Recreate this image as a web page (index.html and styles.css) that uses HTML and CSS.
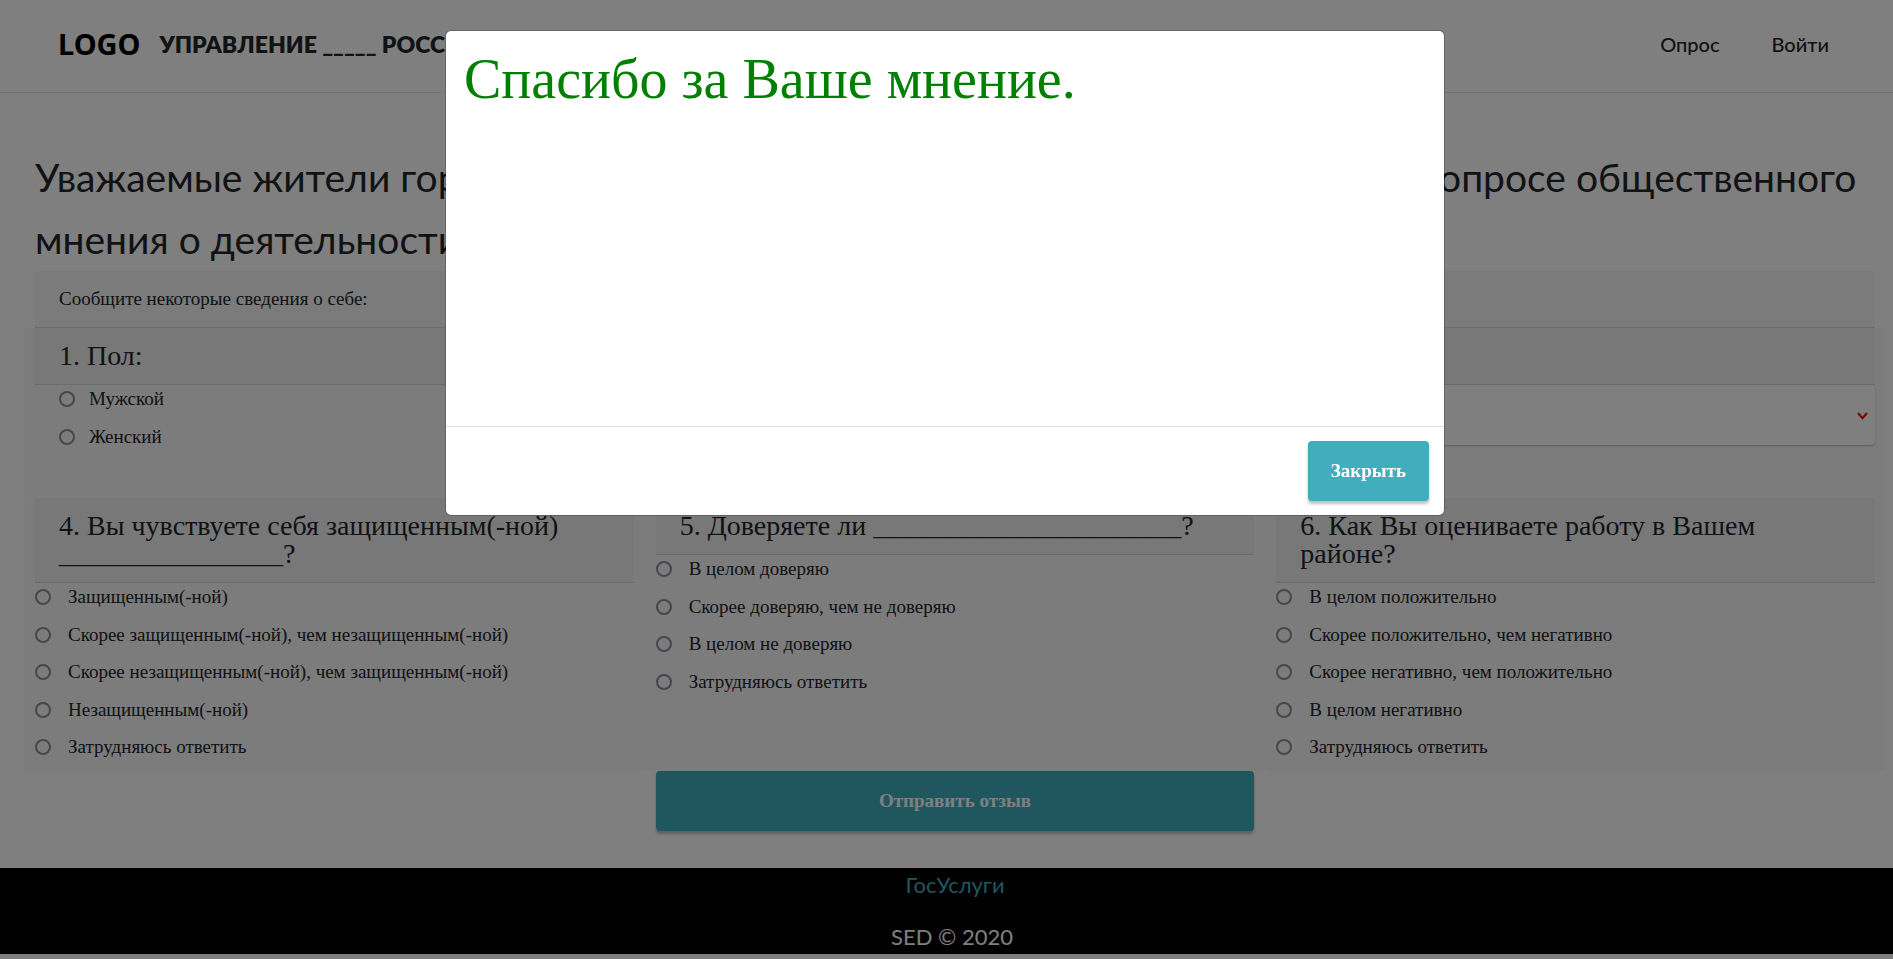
FILE: index.html
```html
<!DOCTYPE html>
<html lang="ru">
<head>
<meta charset="utf-8">
<meta name="viewport" content="width=device-width, initial-scale=1">
<title>Опрос</title>
<link rel="stylesheet" href="styles.css">
</head>
<body>
<header class="navbar">
  <a class="logo" href="#">LOGO</a>
  <span class="org">УПРАВЛЕНИЕ _____ РОССИИ</span>
  <nav class="menu">
    <a href="#">Опрос</a>
    <a href="#">Войти</a>
  </nav>
</header>

<main class="page">
  <h1 class="title">Уважаемые жители города ______! Просим Вас принять участие в анонимном опросе общественного мнения о деятельности управления</h1>
  <form class="survey">
    <p class="card-header intro">Сообщите некоторые сведения о себе:</p>
    <div class="row">
      <fieldset class="card about">
        <legend class="card-header question">1. Пол:</legend>
        <div class="options inset">
          <label class="option"><input type="radio" name="sex">Мужской</label>
          <label class="option"><input type="radio" name="sex">Женский</label>
        </div>
      </fieldset>
      <div class="card about">
        <label class="card-header question" for="age">2. Возраст:</label>
        <div class="select-wrap">
          <select class="select" id="age"><option>18–30</option><option>31–60</option></select>
          <svg class="chevron" viewBox="0 0 11 8" aria-hidden="true"><path d="M1 1 5.5 6.2 10 1"/></svg>
        </div>
      </div>
      <div class="card about">
        <label class="card-header question" for="job">3. Статус:</label>
        <div class="select-wrap">
          <select class="select" id="job"><option>Работаю</option><option>Учусь</option></select>
          <svg class="chevron" viewBox="0 0 11 8" aria-hidden="true"><path d="M1 1 5.5 6.2 10 1"/></svg>
        </div>
      </div>
    </div>
    <div class="row">
      <fieldset class="card">
        <legend class="card-header question">4. Вы чувствуете себя защищенным(-ной) ________________?</legend>
        <div class="options">
          <label class="option"><input type="radio" name="safe">Защищенным(-ной)</label>
          <label class="option"><input type="radio" name="safe">Скорее защищенным(-ной), чем незащищенным(-ной)</label>
          <label class="option"><input type="radio" name="safe">Скорее незащищенным(-ной), чем защищенным(-ной)</label>
          <label class="option"><input type="radio" name="safe">Незащищенным(-ной)</label>
          <label class="option"><input type="radio" name="safe">Затрудняюсь ответить</label>
        </div>
      </fieldset>
      <fieldset class="card">
        <legend class="card-header question">5. Доверяете ли ______________________?</legend>
        <div class="options">
          <label class="option"><input type="radio" name="trust">В целом доверяю</label>
          <label class="option"><input type="radio" name="trust">Скорее доверяю, чем не доверяю</label>
          <label class="option"><input type="radio" name="trust">В целом не доверяю</label>
          <label class="option"><input type="radio" name="trust">Затрудняюсь ответить</label>
        </div>
      </fieldset>
      <fieldset class="card">
        <legend class="card-header question">6. Как Вы оцениваете работу в Вашем районе?</legend>
        <div class="options">
          <label class="option"><input type="radio" name="rate">В целом положительно</label>
          <label class="option"><input type="radio" name="rate">Скорее положительно, чем негативно</label>
          <label class="option"><input type="radio" name="rate">Скорее негативно, чем положительно</label>
          <label class="option"><input type="radio" name="rate">В целом негативно</label>
          <label class="option"><input type="radio" name="rate">Затрудняюсь ответить</label>
        </div>
      </fieldset>
    </div>
    <div class="row">
      <div class="submit-cell"><button class="btn btn-wide" type="submit">Отправить отзыв</button></div>
    </div>
  </form>
</main>

<footer class="footer">
  <a class="footer-link" href="#">ГосУслуги</a>
  <p class="copyright">SED © 2020</p>
</footer>

<div class="backdrop">
  <section class="modal" role="dialog" aria-modal="true" aria-labelledby="thanks">
    <div class="modal-body">
      <h2 class="modal-title" id="thanks">Спасибо за Ваше мнение.</h2>
    </div>
    <div class="modal-footer">
      <button class="btn" type="button">Закрыть</button>
    </div>
  </section>
</div>
</body>
</html>
```

FILE: styles.css
```css
* { box-sizing: border-box; }

:root {
  --accent: #40aebd;
  --ink: #212529;
  --sans: Lato, "Open Sans", sans-serif;
  --serif: "Liberation Serif", "Times New Roman", serif;
}

body {
  margin: 0;
  background: #fff;
  color: var(--ink);
  font: 19px/28px var(--serif);
}

a { color: inherit; text-decoration: none; }

.navbar {
  display: flex;
  align-items: center;
  height: 93px;
  padding: 0 64px 4px 58px;
  border-bottom: 1px solid #e4e4e4;
  font-family: var(--sans);
}
.logo {
  margin-right: 19px;
  color: #000;
  font: 700 29px/40px "Noto Sans", sans-serif;
}
.org { font-size: 23px; font-weight: 800; }
.menu {
  display: flex;
  gap: 52px;
  margin-left: auto;
  font-size: 20px;
  font-weight: 500;
}

.page { padding: 53px 7px 37px 24px; }
.title {
  margin: 0;
  padding: 0 11px 1px;
  font: 400 39px/62px var(--sans);
}

.card-header {
  display: block;
  float: left;
  width: 100%;
  margin: 0;
  padding: 14px 24px;
  border-bottom: 1px solid #d8d8d8;
  background: rgba(0, 0, 0, .03);
}
.intro {
  float: none;
  width: auto;
  margin: 0 11px;
  border-radius: 4px 4px 0 0;
}
.question { font-size: 28px; line-height: 28px; }

.row {
  display: grid;
  grid-template-columns: repeat(3, 1fr);
}
.card {
  min-width: 0;
  margin: 0;
  padding: 0 11px;
  border: 0;
  border-radius: 4px;
  background: #f9f9f9;
}
.about { padding-bottom: 38px; }

.options {
  display: grid;
  clear: both;
  grid-auto-rows: 38px 37px;
}
.option {
  display: flex;
  align-items: flex-start;
  gap: 17px;
  line-height: 28px;
}
.inset { padding-left: 24px; }
.inset .option { gap: 14px; }
.option input {
  appearance: none;
  flex: none;
  width: 16px;
  height: 16px;
  margin: 6px 0 0;
  border: 2px solid #8c8c98;
  border-radius: 50%;
}

.select-wrap { position: relative; clear: both; }
.select {
  appearance: none;
  display: block;
  width: 100%;
  height: 60px;
  padding: 0 24px;
  border: 0;
  border-radius: 4px;
  background: #fff;
  box-shadow: 0 1px 2px rgba(0, 0, 0, .25);
  color: inherit;
  font: inherit;
}
.chevron {
  position: absolute;
  top: 27px;
  right: 7px;
  width: 11px;
  height: 8px;
  fill: none;
  stroke: #f00000;
  stroke-width: 2;
}

.submit-cell {
  grid-column: 2;
  padding: 0 11px;
}
.btn {
  height: 60px;
  padding: 0 23px;
  border: 0;
  border-radius: 4px;
  background: var(--accent);
  box-shadow: 0 3px 3px rgba(0, 0, 0, .25);
  color: #fff;
  font: 700 19px/28px var(--serif);
}
.btn-wide { display: block; width: 100%; }

.footer {
  display: flex;
  flex-direction: column;
  align-items: center;
  gap: 18px;
  padding: 0 7px 0 24px;
  margin-bottom: 5px;
  background: #000;
  color: #fff;
  font: 22px/34px var(--sans);
}
.footer-link { color: var(--accent); }
.copyright { margin: 0; padding-right: 6px; }

.backdrop {
  position: fixed;
  inset: 0;
  padding: 30px 3px 30px 0;
  background: rgba(0, 0, 0, .5);
}
.modal {
  width: 100%;
  max-width: 1000px;
  margin: 0 auto;
  border: 1px solid rgba(0, 0, 0, .2);
  border-radius: 6px;
  background: #fff;
  background-clip: padding-box;
}
.modal-body {
  min-height: 395px;
  padding: 16px 18px;
}
.modal-title {
  margin: 0;
  color: green;
  font-size: 56px;
  font-weight: 400;
  line-height: 64px;
}
.modal-footer {
  display: flex;
  justify-content: flex-end;
  padding: 14px 15px;
  border-top: 1px solid #dee2e6;
}
```
